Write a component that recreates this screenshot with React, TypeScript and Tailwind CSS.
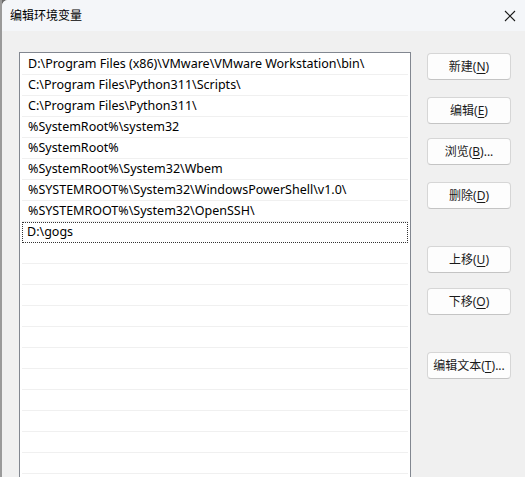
import React from 'react';

const paths = [
  'D:\\Program Files (x86)\\VMware\\VMware Workstation\\bin\\',
  'C:\\Program Files\\Python311\\Scripts\\',
  'C:\\Program Files\\Python311\\',
  '%SystemRoot%\\system32',
  '%SystemRoot%',
  '%SystemRoot%\\System32\\Wbem',
  '%SYSTEMROOT%\\System32\\WindowsPowerShell\\v1.0\\',
  '%SYSTEMROOT%\\System32\\OpenSSH\\',
  'D:\\gogs',
];

const buttons = [
  { label: '新建', key: 'N', tail: '', mt: 'mt-0' },
  { label: '编辑', key: 'E', tail: '', mt: 'mt-[17px]' },
  { label: '浏览', key: 'B', tail: '...', mt: 'mt-[14px]' },
  { label: '删除', key: 'D', tail: '', mt: 'mt-[17px]' },
  { label: '上移', key: 'U', tail: '', mt: 'mt-[37px]' },
  { label: '下移', key: 'O', tail: '', mt: 'mt-[15px]' },
  { label: '编辑文本', key: 'T', tail: '...', mt: 'mt-[37px]' },
];

const font = { fontFamily: '"Noto Sans", "Noto Sans CJK SC", sans-serif' };

const App: React.FC = () => {
  const emptyRows = Array.from({ length: 12 });

  return (
    <div className="w-[525px] h-[477px] overflow-hidden flex bg-[#6b6b6b]" style={font}>
      <div className="w-[2px] bg-[#9a9a9a]" />
      <div className="flex-1 flex flex-col bg-[#f0f0f0] rounded-tl-[6px] overflow-hidden">
        {/* title bar */}
        <div className="h-[31px] shrink-0 flex items-center justify-between bg-[#f4f6f9] pl-[8px] pr-[9px]">
          <span className="text-[12px] text-black leading-none">编辑环境变量</span>
          <svg width="12" height="12" viewBox="0 0 12 12" className="text-[#1a1a1a]">
            <path d="M1 1 L11 11 M11 1 L1 11" stroke="currentColor" strokeWidth="1.1" />
          </svg>
        </div>

        <div className="flex-1 min-h-0 overflow-hidden flex items-start pl-[17px] pt-[21px]">
          {/* list box */}
          <div className="w-[392px] shrink-0 bg-white border border-[#828790] border-b-0 px-[2px] pt-[1px]">
            {paths.map((p, i) => (
              <div
                key={i}
                className={
                  i === paths.length - 1
                    ? 'h-[21px] flex items-center pl-[4px] border border-dotted border-[#333] text-[12.5px] text-black'
                    : 'h-[21px] flex items-center pl-[6px] border-b border-[#f0f0f0] text-[12.5px] text-black'
                }
              >
                {p}
              </div>
            ))}
            {emptyRows.map((_, i) => (
              <div key={'e' + i} className="h-[21px] border-b border-[#f0f0f0]" />
            ))}
          </div>

          {/* buttons */}
          <div className="flex flex-col ml-[16px] pt-[1px]">
            {buttons.map((b, i) => (
              <button
                key={i}
                className={`${b.mt} w-[84px] h-[27px] bg-[#fdfdfd] border border-[#d6d6d6] border-b-[#c4c4c4] rounded-[4px] text-[12px] text-[#1a1a1a] flex items-center justify-center`}
              >
                {b.label}(<span className="underline underline-offset-2">{b.key}</span>){b.tail}
              </button>
            ))}
          </div>
        </div>
      </div>
    </div>
  );
};

export default App;
